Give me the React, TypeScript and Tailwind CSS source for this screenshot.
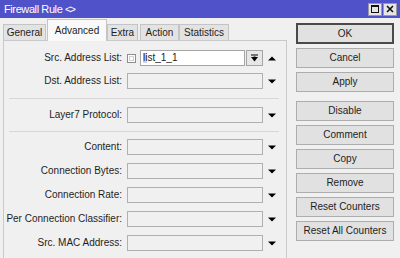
import React from "react";

const tabs = [
  { label: "General", w: "w-[43px]", ml: "ml-0" },
  { label: "Advanced", w: "w-[60px]", ml: "ml-px", active: true },
  { label: "Extra", w: "w-[31px]", ml: "ml-0" },
  { label: "Action", w: "w-[39px]", ml: "ml-[2px]" },
  { label: "Statistics", w: "w-[50px]", ml: "ml-0" },
];

const buttons = [
  { label: "Cancel", mt: "mt-[4px]" },
  { label: "Apply", mt: "mt-[4px]" },
  { label: "Disable", mt: "mt-[9px]" },
  { label: "Comment", mt: "mt-[4px]" },
  { label: "Copy", mt: "mt-[4px]" },
  { label: "Remove", mt: "mt-[4px]" },
  { label: "Reset Counters", mt: "mt-[4px]" },
  { label: "Reset All Counters", mt: "mt-[4px]" },
];

const lowerRows = [
  { label: "Content:", mt: "mt-[7px]" },
  { label: "Connection Bytes:", mt: "mt-[8px]" },
  { label: "Connection Rate:", mt: "mt-[8px]" },
  { label: "Per Connection Classifier:", mt: "mt-[8px]" },
  { label: "Src. MAC Address:", mt: "mt-[8px]" },
];

function Arrow({ up }: { up?: boolean }) {
  return (
    <div className="w-[18px] flex justify-center">
      <svg width="8" height="5" viewBox="0 0 8 5">
        {up ? (
          <polygon points="0,4.5 8,4.5 4,0.5" fill="#000" />
        ) : (
          <polygon points="0,0.5 8,0.5 4,4.5" fill="#000" />
        )}
      </svg>
    </div>
  );
}

function Label({ text }: { text: string }) {
  return (
    <div className="w-[118px] shrink-0 text-right whitespace-nowrap leading-none">{text}</div>
  );
}

function EmptyRow({ label, mt }: { label: string; mt: string }) {
  return (
    <div className={`flex items-center h-[16px] ${mt}`}>
      <Label text={label} />
      <div className="ml-[5px] w-[136px] h-[16px] bg-[#f0f0f0] border border-[#b0b0b0]" />
      <Arrow />
    </div>
  );
}

function Separator({ mt }: { mt: string }) {
  return <div className={`ml-[5px] w-[270px] h-px bg-[#d7d7d7] ${mt}`} />;
}

export default function App() {
  return (
    <div className="w-[400px] h-[258px] overflow-hidden bg-[#f0f0f0] flex flex-col text-[10px] text-[#1e1e1e] font-['Liberation_Sans',Arial,sans-serif]">
      {/* Title bar */}
      <div className="h-[18px] shrink-0 bg-[#4f52c8] flex items-center pl-[4px] pr-[3px]">
        <span className="text-white text-[11px] tracking-[-0.4px] leading-none">
          Firewall Rule <span className="tracking-[-2px]">&lt;&gt;</span>
        </span>
        <div className="ml-auto flex gap-px">
          <div className="w-[14px] h-[13px] bg-[#e6e6e6] border border-[#9a9a9a] flex items-center justify-center">
            <div className="w-[8px] h-[8px] border border-[#111] border-t-2" />
          </div>
          <div className="w-[14px] h-[13px] bg-[#e6e6e6] border border-[#9a9a9a] flex items-center justify-center">
            <svg width="8" height="8" viewBox="0 0 8 8">
              <path d="M1 1 L7 7 M7 1 L1 7" stroke="#111" strokeWidth="1.6" />
            </svg>
          </div>
        </div>
      </div>

      <div className="flex-1 flex">
        {/* Left: tabs + panel */}
        <div className="ml-[3px] w-[284px] flex flex-col pt-px">
          <div className="h-[21px] flex items-end relative z-10">
            {tabs.map((t) =>
              t.active ? (
                <div
                  key={t.label}
                  className={`${t.w} ${t.ml} h-[22px] -mb-px bg-[#f9f9f9] border border-b-0 border-[#c4c4c4] flex items-center justify-center leading-none`}
                >
                  {t.label}
                </div>
              ) : (
                <div
                  key={t.label}
                  className={`${t.w} ${t.ml} h-[16px] bg-[#e3e3e3] border border-b-0 border-[#c4c4c4] flex items-center justify-center leading-none`}
                >
                  {t.label}
                </div>
              )
            )}
          </div>
          <div className="flex-1 border border-b-0 border-[#c9c9c9] bg-[#f0f0f0] flex flex-col">
            {/* Src. Address List */}
            <div className="flex items-center h-[16px] mt-[9px]">
              <Label text="Src. Address List:" />
              <div className="ml-[5px] w-[9px] h-[9px] border border-[#8e8e8e] bg-white p-px">
                <div className="w-full h-full border border-[#d0d0d0]" />
              </div>
              <div className="ml-[4px] w-[105px] h-[16px] bg-white border border-[#a5a5a5] flex items-center pl-[2px] leading-none">
                <span className="bg-[#c9d3ea]">li</span>st_1_1
              </div>
              <div className="ml-px w-[17px] h-[16px] bg-[#e6e6e6] border border-[#a5a5a5] flex items-center justify-center">
                <svg width="7" height="8" viewBox="0 0 7 8">
                  <rect x="0" y="0.5" width="7" height="1" fill="#000" />
                  <polygon points="0,3 7,3 3.5,7.5" fill="#000" />
                  <rect x="2.5" y="2.5" width="2" height="2" fill="#000" />
                </svg>
              </div>
              <Arrow up />
            </div>
            <EmptyRow label="Dst. Address List:" mt="mt-[7px]" />
            <Separator mt="mt-[9px]" />
            <EmptyRow label="Layer7 Protocol:" mt="mt-[8px]" />
            <Separator mt="mt-[8px]" />
            {lowerRows.map((r) => (
              <EmptyRow key={r.label} label={r.label} mt={r.mt} />
            ))}
          </div>
        </div>

        {/* Right: buttons */}
        <div className="ml-[9px] w-[98px] flex flex-col pt-[5px]">
          <div className="h-[21px] bg-[#e1e1e1] border-2 border-[#4a4a4a] flex items-center justify-center leading-none">
            OK
          </div>
          {buttons.map((b) => (
            <div
              key={b.label}
              className={`h-[20px] ${b.mt} bg-[#e1e1e1] border border-[#adadad] flex items-center justify-center leading-none whitespace-nowrap`}
            >
              {b.label}
            </div>
          ))}
        </div>
      </div>
    </div>
  );
}
